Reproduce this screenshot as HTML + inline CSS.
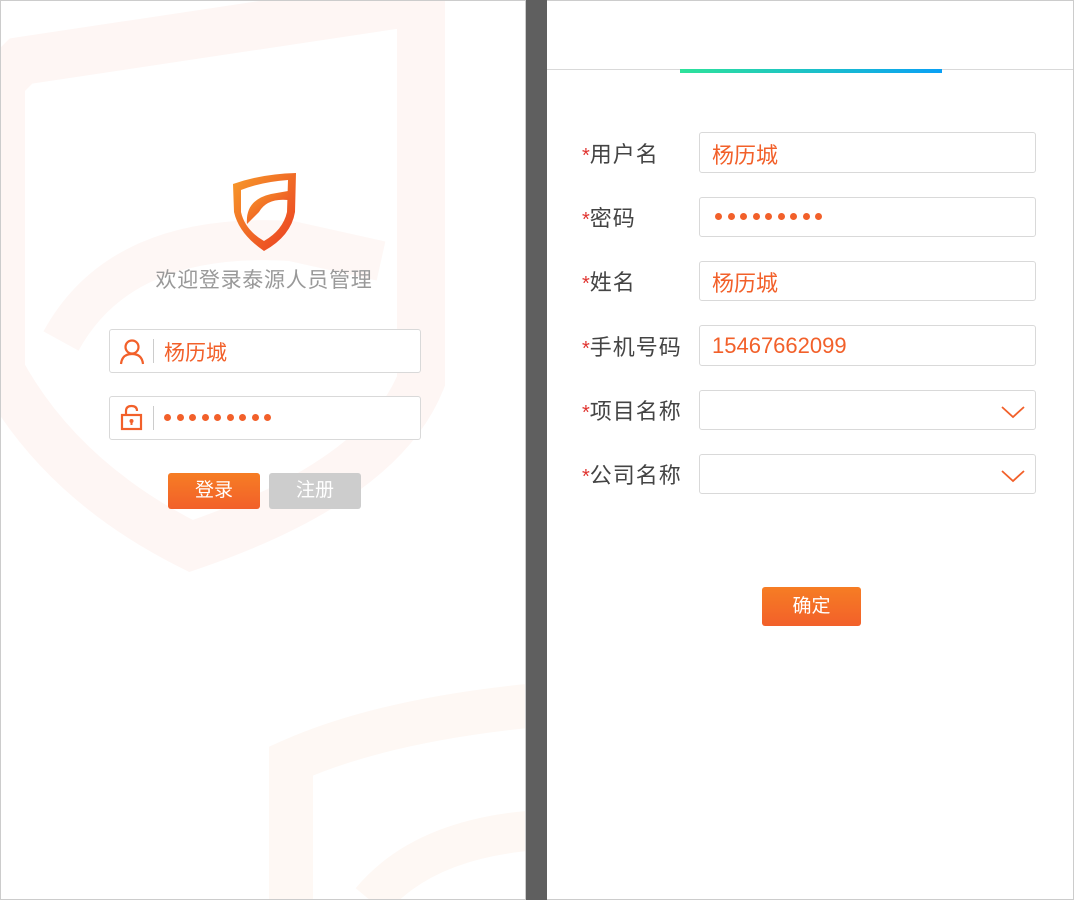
<!DOCTYPE html>
<html><head><meta charset="utf-8"><style>
*{margin:0;padding:0;box-sizing:border-box}
body{width:1074px;height:900px;background:#5f5f5f;position:relative;overflow:hidden;font-family:"Liberation Sans","Noto Sans CJK SC",sans-serif}
.lp{position:absolute;left:0;top:0;width:526px;height:900px;background:#fff;border:1px solid #ccc;overflow:hidden}
.rp{position:absolute;left:547px;top:0;width:527px;height:900px;background:#fff;border:1px solid #ccc;border-left:none}
.inp{position:absolute;border:1px solid #d9d9d9;border-radius:3px;background:#fff}
.ot{color:#f2602a}
.btn{position:absolute;border-radius:3px;color:#fff;font-size:19px;text-align:center}
.lbl{position:absolute;left:35px;font-size:22px;color:#444;letter-spacing:1px}
.lbl b{color:#e0332f;font-weight:normal;font-size:20px;letter-spacing:0}
.dots{position:absolute;display:flex;gap:5.5px}
.dots i{display:block;width:7px;height:7px;border-radius:50%;background:#f2602a}
</style></head><body>
<div class="lp">
<svg width="526" height="900" style="position:absolute;left:0;top:0">
<path d="M20 60 L420 0 L420 380 Q380 480 190 545 Q60 480 0 370 L0 80 Z" fill="none" stroke="#fef6f4" stroke-width="48"/>
<path d="M60 340 Q120 230 290 240 L380 260" fill="none" stroke="#fef7f5" stroke-width="40"/>
<path d="M290 900 L290 760 Q380 720 526 705" fill="none" stroke="#fef8f4" stroke-width="44"/>
<path d="M370 900 Q420 840 526 830" fill="none" stroke="#fef8f4" stroke-width="40"/>
</svg>
<svg width="66" height="80" viewBox="0 0 66 80" style="position:absolute;left:230px;top:171px">
<defs><linearGradient id="g" x1="0" y1="0" x2="1" y2="1"><stop offset="0" stop-color="#f79b2a"/><stop offset="1" stop-color="#ea3b22"/></linearGradient></defs>
<path d="M2 12 Q30 2 65 1 L64 40 Q60 64 33 79 Q8 62 3 40 Z M10 18 L10 40 Q14 58 33 69 Q52 58 56 40 L57 8 Q30 10 10 18 Z" fill="url(#g)" fill-rule="evenodd"/>
<path d="M16 52 Q14 28 40 22 L57 19 L57 28 Q36 26 28 40 Z" fill="url(#g)"/>
</svg>
<div style="position:absolute;left:0;width:526px;top:263px;text-align:center;font-size:21px;letter-spacing:0.7px;color:#999">欢迎登录泰源人员管理</div>
<div class="inp" style="left:108px;top:328px;width:312px;height:44px">
<svg width="28" height="28" viewBox="0 0 28 28" style="position:absolute;left:8px;top:7px"><circle cx="14" cy="10" r="6.5" fill="none" stroke="#f2602a" stroke-width="2.2"/><path d="M3 27 Q4 17 14 17 Q24 17 25 27" fill="none" stroke="#f2602a" stroke-width="2.2"/></svg>
<div style="position:absolute;left:43px;top:9px;width:1px;height:24px;background:#ccc"></div>
<div class="ot" style="position:absolute;left:54px;top:7px;font-size:21px">杨历城</div>
</div>
<div class="inp" style="left:108px;top:395px;width:312px;height:44px">
<svg width="28" height="28" viewBox="0 0 28 28" style="position:absolute;left:8px;top:7px"><rect x="4" y="11" width="19" height="14" fill="none" stroke="#f2602a" stroke-width="2.2"/><path d="M8 11 V7 Q8 2 13.5 2 Q19 2 19 7" fill="none" stroke="#f2602a" stroke-width="2.2"/><circle cx="13.5" cy="17" r="2" fill="#f2602a"/><rect x="12.5" y="17" width="2" height="4" fill="#f2602a"/></svg>
<div style="position:absolute;left:43px;top:9px;width:1px;height:24px;background:#ccc"></div>
<div class="dots" style="left:54px;top:17px"><i></i><i></i><i></i><i></i><i></i><i></i><i></i><i></i><i></i></div>
</div>
<div class="btn" style="left:167px;top:472px;width:92px;height:36px;line-height:36px;background:linear-gradient(#f67d24,#f2602a)">登录</div>
<div class="btn" style="left:268px;top:472px;width:92px;height:36px;line-height:36px;background:#cdcdcd">注册</div>
</div>
<div class="rp">
<div style="position:absolute;left:0;top:68px;width:526px;height:1px;background:#d9d9d9"></div>
<div style="position:absolute;left:133px;top:68px;width:262px;height:4px;background:linear-gradient(90deg,#2ee29a,#0aa0f5)"></div>
<div class="lbl" style="top:136px"><b>*</b>用户名</div>
<div class="inp" style="left:152px;top:131px;width:337px;height:41px"><span class="ot" style="position:absolute;left:12px;top:5px;font-size:22px">杨历城</span></div>
<div class="lbl" style="top:200px"><b>*</b>密码</div>
<div class="inp" style="left:152px;top:196px;width:337px;height:40px"><div class="dots" style="left:15px;top:15px"><i></i><i></i><i></i><i></i><i></i><i></i><i></i><i></i><i></i></div></div>
<div class="lbl" style="top:264px"><b>*</b>姓名</div>
<div class="inp" style="left:152px;top:260px;width:337px;height:40px"><span class="ot" style="position:absolute;left:12px;top:4px;font-size:22px">杨历城</span></div>
<div class="lbl" style="top:329px"><b>*</b>手机号码</div>
<div class="inp" style="left:152px;top:324px;width:337px;height:41px"><span class="ot" style="position:absolute;left:12px;top:7px;font-size:22px">15467662099</span></div>
<div class="lbl" style="top:393px"><b>*</b>项目名称</div>
<div class="inp" style="left:152px;top:389px;width:337px;height:40px"><svg width="24" height="14" style="position:absolute;right:10px;top:14px"><path d="M1 2 L12 12 L23 2" fill="none" stroke="#f2602a" stroke-width="1.8"/></svg></div>
<div class="lbl" style="top:457px"><b>*</b>公司名称</div>
<div class="inp" style="left:152px;top:453px;width:337px;height:40px"><svg width="24" height="14" style="position:absolute;right:10px;top:14px"><path d="M1 2 L12 12 L23 2" fill="none" stroke="#f2602a" stroke-width="1.8"/></svg></div>
<div class="btn" style="left:215px;top:586px;width:99px;height:39px;line-height:39px;background:linear-gradient(#f67d24,#f2602a)">确定</div>
</div>
</body></html>
